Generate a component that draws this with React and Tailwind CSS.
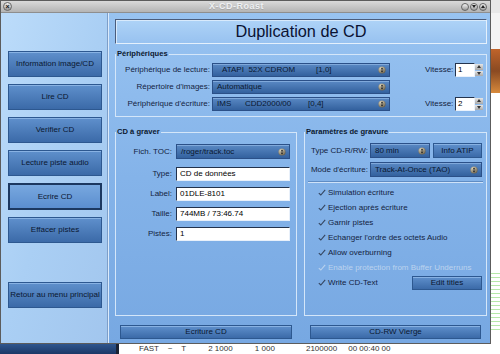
import React from "react";

function Knob() {
  return (
    <svg width="8" height="8" viewBox="0 0 8 8">
      <defs>
        <radialGradient id="kg" cx="40%" cy="35%" r="65%">
          <stop offset="0" stopColor="#f2ead0" />
          <stop offset="1" stopColor="#6a604a" />
        </radialGradient>
      </defs>
      <circle cx="4" cy="4" r="3.6" fill="url(#kg)" />
      <path d="M4 1.6 L5.5 3.4 H2.5Z M4 6.4 L5.5 4.6 H2.5Z" fill="#1e1e1e" />
    </svg>
  );
}

function Check({ dim }) {
  return (
    <svg width="8" height="7" viewBox="0 0 8 7">
      <path d="M0.8 4.2 L2.8 6 L7.2 0.8" fill="none" stroke={dim ? "#b9d2ee" : "#33445e"} strokeWidth="1.1" />
    </svg>
  );
}

function Combo({ className, children }) {
  return (
    <div className={`flex items-center border border-[#2b5088] bg-gradient-to-b from-[#5a89c4] to-[#33619e] shadow-[inset_0_1px_0_#80a9db] text-[#0a1830] ${className}`}>
      <div className="flex-1 flex items-center overflow-hidden whitespace-pre">{children}</div>
      <div className="w-[14px] flex justify-center items-center">
        <Knob />
      </div>
    </div>
  );
}

function Btn({ className, children }) {
  return (
    <div className={`flex items-center justify-center border border-[#2d5890] bg-gradient-to-b from-[#5f90cc] to-[#3b6aa8] shadow-[inset_0_1px_0_#88b2e3] text-[#0a1730] ${className}`}>
      {children}
    </div>
  );
}

function SideBtn({ children, active }) {
  return active ? (
    <div className="h-[27px] w-[94px] flex items-center justify-center border-2 border-[#1c3860] bg-gradient-to-b from-[#78a8df] to-[#5b8ecf] text-[#0a1730]">
      {children}
    </div>
  ) : (
    <Btn className="h-[26px] w-[94px]">{children}</Btn>
  );
}

function Spin({ v }) {
  return (
    <div className="flex items-center h-[14px]">
      <div className="w-[20px] h-[14px] bg-white border border-[#24344e] border-r-[#eaf2fc] border-b-[#eaf2fc] text-black pl-[2px] leading-[12px]">
        {v}
      </div>
      <div className="w-[8px] h-[14px] flex flex-col gap-[1px] py-[1px]">
        <div className="flex-1 bg-gradient-to-b from-[#e6e6e6] to-[#a8a8a8] flex items-center justify-center">
          <svg width="4" height="3" viewBox="0 0 4 3"><path d="M2 0 L4 3 H0Z" fill="#333" /></svg>
        </div>
        <div className="flex-1 bg-gradient-to-b from-[#e6e6e6] to-[#a8a8a8] flex items-center justify-center">
          <svg width="4" height="3" viewBox="0 0 4 3"><path d="M2 3 L4 0 H0Z" fill="#333" /></svg>
        </div>
      </div>
    </div>
  );
}

function Input({ children }) {
  return (
    <div className="w-[114px] h-[14px] bg-white border border-[#22324c] border-r-[#e8f0fa] border-b-[#e8f0fa] text-black pl-[3px] leading-[12px] whitespace-nowrap">
      {children}
    </div>
  );
}

function CheckRow({ children, dim }) {
  return (
    <div className={`h-[15px] flex items-center pl-[13px] gap-[2px] ${dim ? "text-[#bcd3ee]" : "text-[#13233f]"}`}>
      <Check dim={dim} />
      <span>{children}</span>
    </div>
  );
}

const legendCls = "ml-0 px-[1px] text-[7.6px] font-bold leading-[10px] text-[#0c1930]";

export default function App() {
  return (
    <div className="w-[500px] h-[354px] overflow-hidden bg-white font-['Liberation_Sans',Arial,sans-serif] text-[8px]">
      <div className="flex">
        {/* window */}
        <div className="w-[491px] h-[344px] flex flex-col border border-[#5c5c5c] shrink-0">
          {/* title bar */}
          <div className="h-[12px] flex items-center bg-gradient-to-b from-[#dadada] to-[#b4b4b4] border-b border-[#8e8e8e] px-[2px]">
            <div className="w-[9px] h-[9px] rounded-full bg-gradient-to-b from-[#f4f4f4] to-[#9a9a9a] border border-[#666] flex items-center justify-center text-[7px] leading-none text-[#111] font-bold">
              ×
            </div>
            <div className="flex-1 text-center text-[9px] leading-[11px] font-bold text-[#eef0f2] tracking-[0.5px] [text-shadow:0_1px_0_#a8a8a8]">
              X-CD-Roast
            </div>
            <div className="flex gap-[1px] pr-[1px]">
              <div className="w-[8px] h-[8px] rounded-full bg-gradient-to-b from-[#f4f4f4] to-[#9a9a9a] border border-[#666]" />
              <div className="w-[8px] h-[8px] rounded-full bg-gradient-to-b from-[#f4f4f4] to-[#9a9a9a] border border-[#666] flex items-center justify-center">
                <svg width="4" height="3" viewBox="0 0 4 3"><path d="M0 0 H4 L2 3Z" fill="#222" /></svg>
              </div>
              <div className="w-[8px] h-[8px] rounded-full bg-gradient-to-b from-[#f4f4f4] to-[#9a9a9a] border border-[#666] flex items-center justify-center">
                <svg width="4" height="3" viewBox="0 0 4 3"><path d="M0 3 H4 L2 0Z" fill="#222" /></svg>
              </div>
            </div>
          </div>

          {/* body */}
          <div className="flex-1 flex">
            {/* left panel */}
            <div className="w-[106px] flex flex-col pl-[7px] pt-[38px] bg-gradient-to-br from-[#bcdcfa] via-[#aacff4] to-[#a2c6ee]">
              <div className="flex flex-col gap-[7px]">
                <SideBtn>Information image/CD</SideBtn>
                <SideBtn>Lire CD</SideBtn>
                <SideBtn>Verifier CD</SideBtn>
                <SideBtn>Lecture piste audio</SideBtn>
                <SideBtn active>Ecrire CD</SideBtn>
                <SideBtn>Effacer pistes</SideBtn>
              </div>
              <div className="mt-[39px]">
                <SideBtn>Retour au menu principal</SideBtn>
              </div>
            </div>
            <div className="w-[1px] bg-[#7d9ec8]" />
            <div className="w-[1px] bg-[#dcebfb]" />

            {/* right content */}
            <div className="flex-1 flex flex-col pl-[6px] pr-[3px] pt-[6px] bg-gradient-to-b from-[#98c3f1] via-[#84b3e9] to-[#77a8e2]">
              {/* header */}
              <div className="h-[25px] border border-[#4a5c7c] border-r-[#e4f0fc] border-b-[#e4f0fc] bg-gradient-to-b from-[#aed3f7] to-[#98c2f0] shadow-[inset_1px_1px_0_#d8eafc] flex items-center justify-center text-[16.3px] text-[#0a1232]">
                Duplication de CD
              </div>

              {/* Périphériques */}
              <fieldset className="mt-[5px] h-[68px] border border-[#d4e6f9] min-w-0">
                <legend className={legendCls}>Périphériques</legend>
                <div className="flex flex-col gap-[3px] pt-[4px] text-[#13233f]">
                  <div className="flex items-center h-[14px]">
                    <div className="w-[95px] text-right pr-[1px]">Périphérique de lecture:</div>
                    <Combo className="ml-[1px] w-[178px] h-[14px]">
                      <span className="w-[103px] pl-[9px]">ATAPI  52X CDROM</span>
                      <span>[1,0]</span>
                    </Combo>
                    <div className="ml-[35px] w-[30px]">Vitesse:</div>
                    <Spin v="1" />
                  </div>
                  <div className="flex items-center h-[14px]">
                    <div className="w-[95px] text-right pr-[1px]">Répertoire d'images:</div>
                    <Combo className="ml-[1px] w-[178px] h-[14px]">
                      <span className="pl-[4px]">Automatique</span>
                    </Combo>
                  </div>
                  <div className="flex items-center h-[14px]">
                    <div className="w-[95px] text-right pr-[1px]">Périphérique d'écriture:</div>
                    <Combo className="ml-[1px] w-[178px] h-[14px]">
                      <span className="w-[32px] pl-[4px]">IMS</span>
                      <span className="w-[63px]">CDD2000/00</span>
                      <span>[0,4]</span>
                    </Combo>
                    <div className="ml-[35px] w-[30px]">Vitesse:</div>
                    <Spin v="2" />
                  </div>
                </div>
              </fieldset>

              {/* two frames */}
              <div className="mt-[10px] h-[189px] grid grid-cols-[182px_183px] gap-[7px]">
                <fieldset className="border border-[#d4e6f9] min-w-0">
                  <legend className={legendCls}>CD à graver</legend>
                  <div className="pt-[7px] flex flex-col text-[#13233f]">
                    <div className="flex items-center h-[15px]">
                      <div className="w-[56px] text-right">Fich. TOC:</div>
                      <Combo className="ml-[4px] w-[114px] h-[15px]">
                        <span className="pl-[4px]">/roger/track.toc</span>
                      </Combo>
                    </div>
                    <div className="flex flex-col gap-[6px] mt-[8px]">
                      {[
                        ["Type:", "CD de données"],
                        ["Label:", "01DLE-8101"],
                        ["Taille:", "744MB / 73:46.74"],
                        ["Pistes:", "1"],
                      ].map(([l, v]) => (
                        <div key={l} className="flex items-center h-[14px]">
                          <div className="w-[56px] text-right">{l}</div>
                          <div className="ml-[4px]">
                            <Input>{v}</Input>
                          </div>
                        </div>
                      ))}
                    </div>
                  </div>
                </fieldset>

                <fieldset className="border border-[#d4e6f9] min-w-0">
                  <legend className={legendCls}>Paramètres de gravure</legend>
                  <div className="pt-[6px] flex flex-col text-[#13233f]">
                    <div className="flex items-center h-[15px]">
                      <div className="w-[63px] text-right">Type CD-R/RW:</div>
                      <Combo className="ml-[2px] w-[60px] h-[15px]">
                        <span className="pl-[4px]">80 min</span>
                      </Combo>
                      <Btn className="ml-[3px] w-[49px] h-[15px]">Info ATIP</Btn>
                    </div>
                    <div className="flex items-center h-[15px] mt-[4px]">
                      <div className="w-[63px] text-right">Mode d'écriture:</div>
                      <Combo className="ml-[2px] w-[112px] h-[15px]">
                        <span className="pl-[4px]">Track-At-Once (TAO)</span>
                      </Combo>
                    </div>
                    <div className="mt-[4px] mx-[3px] border-t border-[#5f8cc4] border-b border-b-[#cfe2f8]" />
                    <div className="mt-[2px] flex flex-col">
                      <CheckRow>Simulation écriture</CheckRow>
                      <CheckRow>Ejection après écriture</CheckRow>
                      <CheckRow>Garnir pistes</CheckRow>
                      <CheckRow>Echanger l'ordre des octets Audio</CheckRow>
                      <CheckRow>Allow overburning</CheckRow>
                      <CheckRow dim>Enable protection from Buffer Underruns</CheckRow>
                      <div className="h-[15px] flex items-center">
                        <div className="flex-1">
                          <CheckRow>Write CD-Text</CheckRow>
                        </div>
                        <Btn className="mr-[4px] w-[70px] h-[14px]">Edit titles</Btn>
                      </div>
                    </div>
                  </div>
                </fieldset>
              </div>

              {/* bottom buttons */}
              <div className="mt-[9px] grid grid-cols-[182px_183px] gap-[7px]">
                <div className="px-[5px]">
                  <Btn className="h-[14px] w-full">Ecriture CD</Btn>
                </div>
                <div className="pl-[6px] pr-[6px]">
                  <Btn className="h-[14px] w-full">CD-RW Vierge</Btn>
                </div>
              </div>
            </div>
          </div>
        </div>

        {/* desktop right strip */}
        <div className="flex-1 h-[344px] flex flex-col bg-white">
          <div className="h-[13px] bg-[#e8e8e8]" />
          <div className="h-[36px] bg-[#f4f4f4]" />
          <div className="h-[44px] bg-gradient-to-b from-[#c0642a] via-[#8a4a22] to-[#d88a3c]" />
          <div className="h-[180px] bg-white" />
          <div className="h-[60px] bg-[repeating-linear-gradient(0deg,#ffffff_0px,#ffffff_3px,#b6e8a8_3px,#b6e8a8_4px)]" />
        </div>
      </div>

      {/* desktop bottom strip */}
      <div className="h-[10px] flex">
        <div className="w-[116px] bg-gradient-to-b from-[#2f568e] to-[#1b3766]" />
        <div className="w-[3px] bg-[#1a2233]" />
        <div className="flex-1 bg-white overflow-hidden">
          <div className="text-[8px] leading-[9px] text-[#333] whitespace-pre pl-[20px]">
            FAST    ~    T          2 1000          1 000              2100000     00 00:40 00
          </div>
        </div>
      </div>
    </div>
  );
}
